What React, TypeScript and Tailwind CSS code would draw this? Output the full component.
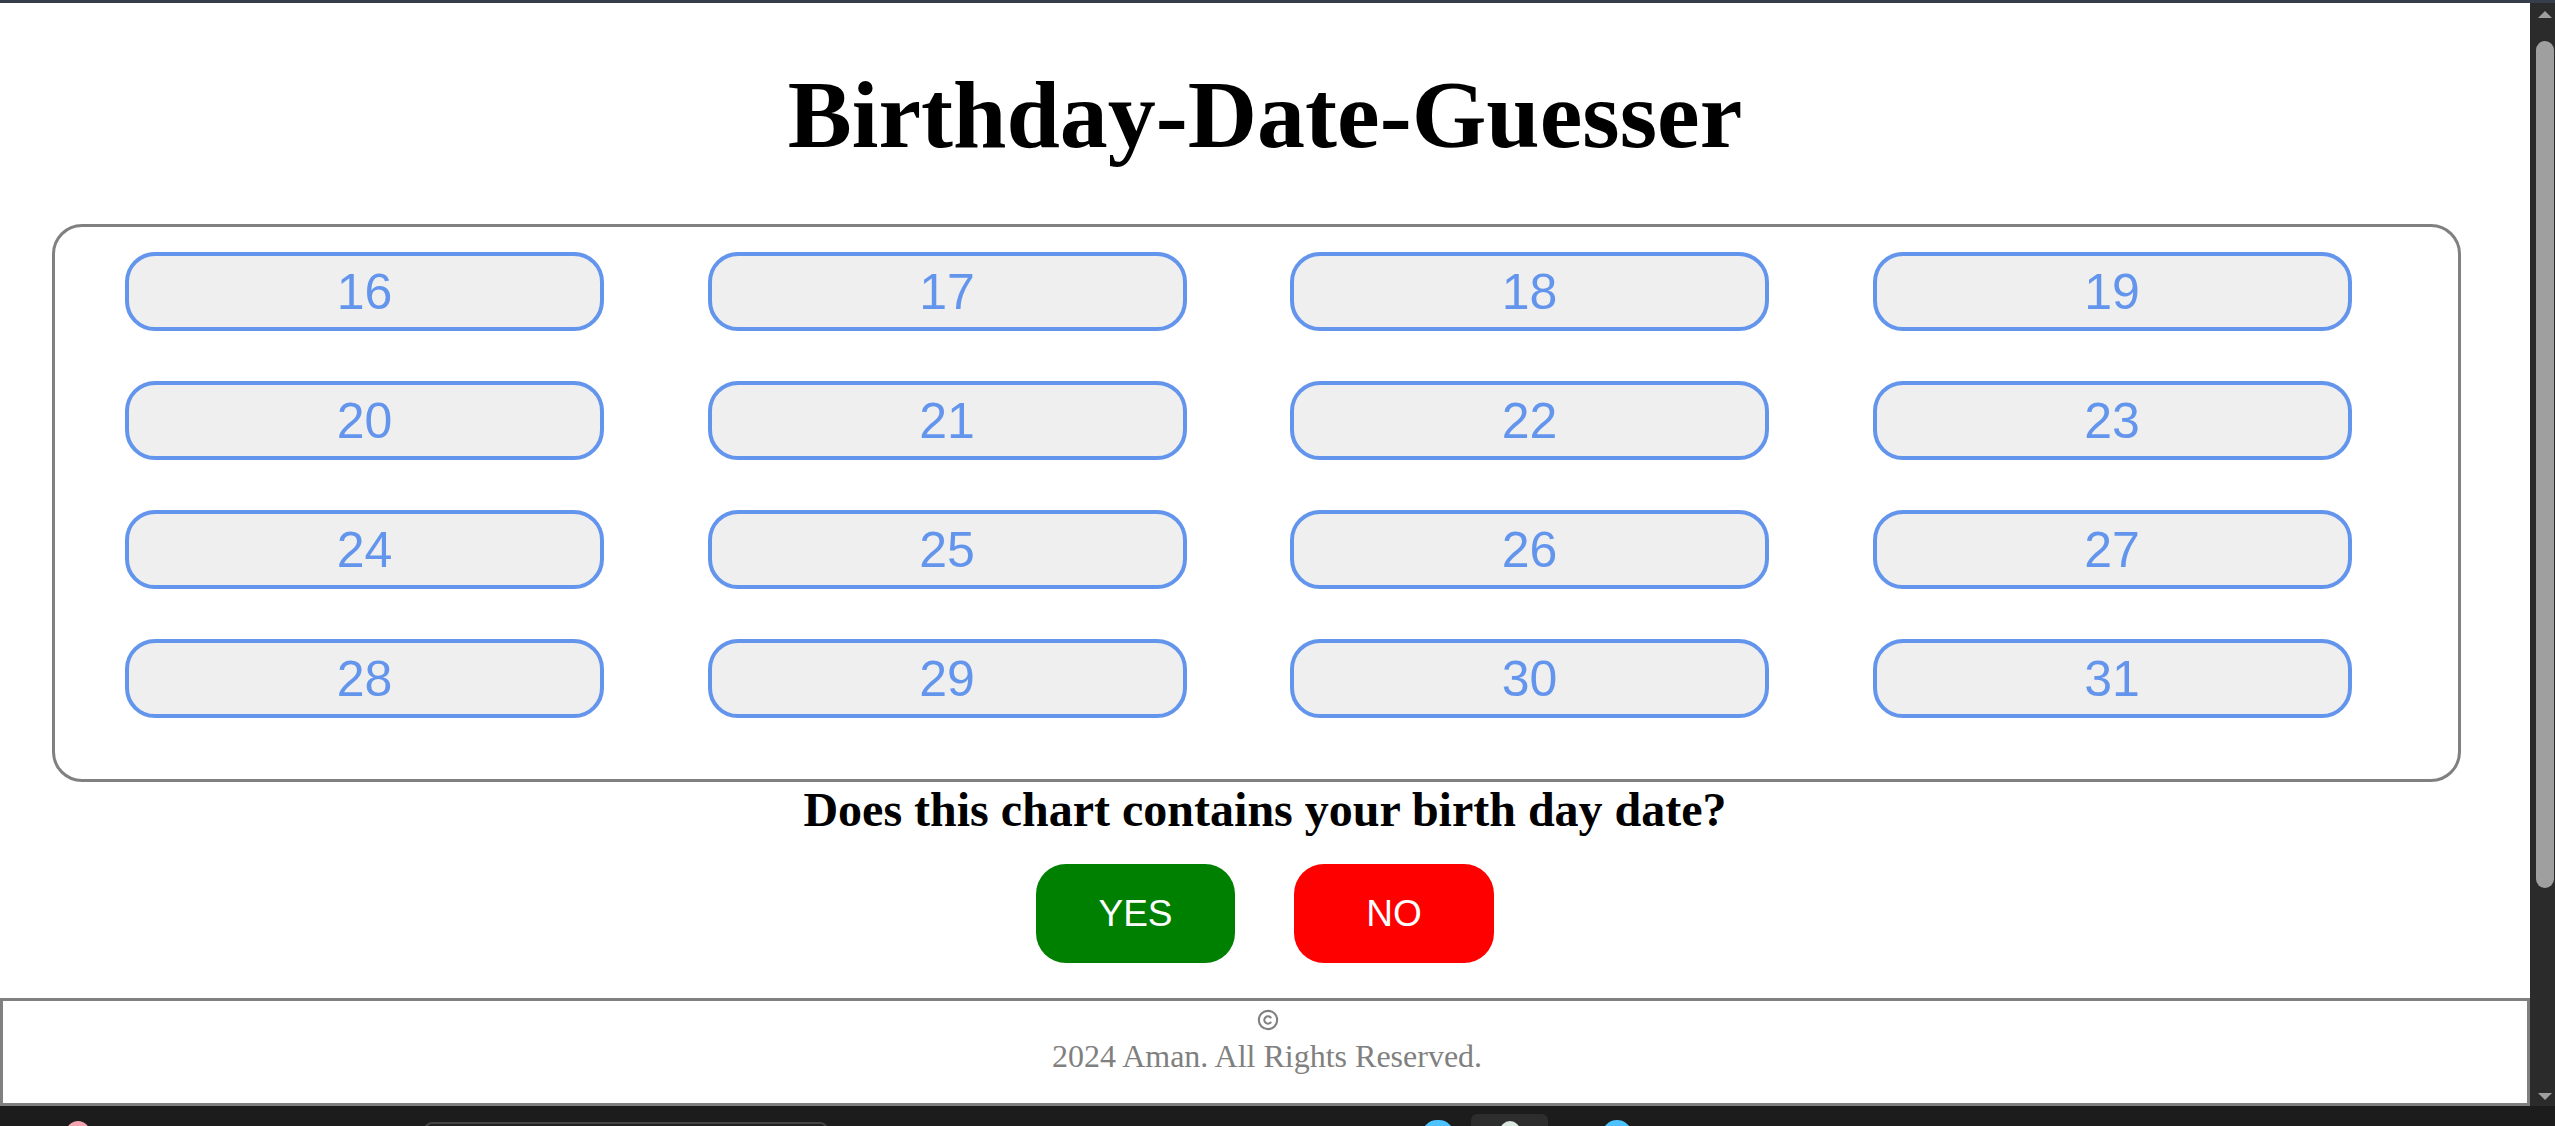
import React from "react";
import { Copyright } from "lucide-react";

const dates = [16, 17, 18, 19, 20, 21, 22, 23, 24, 25, 26, 27, 28, 29, 30, 31];

const serif = "font-['Liberation_Serif','Times_New_Roman',serif]";
const sans = "font-['Liberation_Sans',Arial,sans-serif]";

const DateChart = () => {
  return (
    <div className="ml-[52px] mt-[54px] w-[2409px] rounded-[30px] border-[3px] border-[#808080] pl-[70px] pt-[25px] pb-[61px]">
      <div className="grid grid-cols-[repeat(4,479px)] gap-x-[103.5px] gap-y-[50px]">
        {dates.map((d) => (
          <button
            key={`date-${d}`}
            className={`${sans} h-[79px] rounded-[30px] border-4 border-[#6495ed] bg-[#efefef] text-[50px] leading-none text-[#6495ed]`}
          >
            {d}
          </button>
        ))}
      </div>
    </div>
  );
};

const Scrollbar = () => {
  return (
    <div className="flex w-[25px] flex-col items-center bg-[#2b2b2b]">
      <div className="mt-[8px] ml-[5px] h-0 w-0 border-x-[7px] border-b-[7px] border-x-transparent border-b-[#9f9f9f]" />
      <div className="mt-[23px] ml-[5px] h-[847px] w-[18px] rounded-full bg-[#9f9f9f]" />
      <div className="mt-auto mb-[6px] ml-[5px] h-0 w-0 border-x-[7px] border-t-[7px] border-x-transparent border-t-[#9f9f9f]" />
    </div>
  );
};

const Taskbar = () => {
  return (
    <div className="flex h-[20px] items-start overflow-hidden bg-[#1c1c1c]">
      <div className="ml-[66px] mt-[15px] h-[24px] w-[24px] rounded-full bg-[#f4a3b0]" />
      <div className="ml-[334px] mt-[16px] h-[30px] w-[404px] rounded-[8px] border-2 border-[#444444] bg-[#202020]" />
      <div className="ml-[594px] mt-[14px] h-[30px] w-[32px] rounded-full bg-[#4cc2ff]" />
      <div className="ml-[17px] mt-[8px] flex h-[30px] w-[77px] justify-center rounded-[6px] bg-[#2d2d2d]">
        <div className="mt-[7px] h-[20px] w-[20px] rounded-full bg-[#dbe8e0]" />
      </div>
      <div className="ml-[54px] mt-[14px] h-[30px] w-[30px] rounded-full bg-[#4cc2ff]" />
    </div>
  );
};

export default function App() {
  return (
    <div className="flex h-[1126px] w-[2555px] flex-col overflow-hidden bg-white">
      <div className="h-[3px] bg-[#363d4b]" />
      <div className="flex min-h-0 flex-1">
        <div className="flex flex-1 flex-col">
          <h1 className={`${serif} mt-[57px] text-center text-[96px] font-bold leading-[110px] text-black`}>
            Birthday-Date-Guesser
          </h1>
          <DateChart />
          <h2 className={`${serif} mt-[1px] text-center text-[48px] font-bold leading-[54px] text-black`}>
            Does this chart contains your birth day date?
          </h2>
          <div className="mt-[27px] flex justify-center gap-[59px]">
            <button className={`${sans} h-[99px] w-[199px] rounded-[30px] bg-[#008000] text-[37px] text-white`}>
              YES
            </button>
            <button className={`${sans} h-[99px] w-[200px] rounded-[30px] bg-[#ff0000] text-[37px] text-white`}>
              NO
            </button>
          </div>
          <footer className={`${serif} mt-[35px] h-[108px] border-[3px] border-[#808080] text-center text-[32px] leading-[37px] text-[#808080]`}>
            <div className="flex h-[37px] items-center justify-center pl-[5px]">
              <Copyright size={22} strokeWidth={2.3} color="#808080" />
            </div>
            <p className="pl-[4px]">2024 Aman. All Rights Reserved.</p>
          </footer>
        </div>
        <Scrollbar />
      </div>
      <Taskbar />
    </div>
  );
}
